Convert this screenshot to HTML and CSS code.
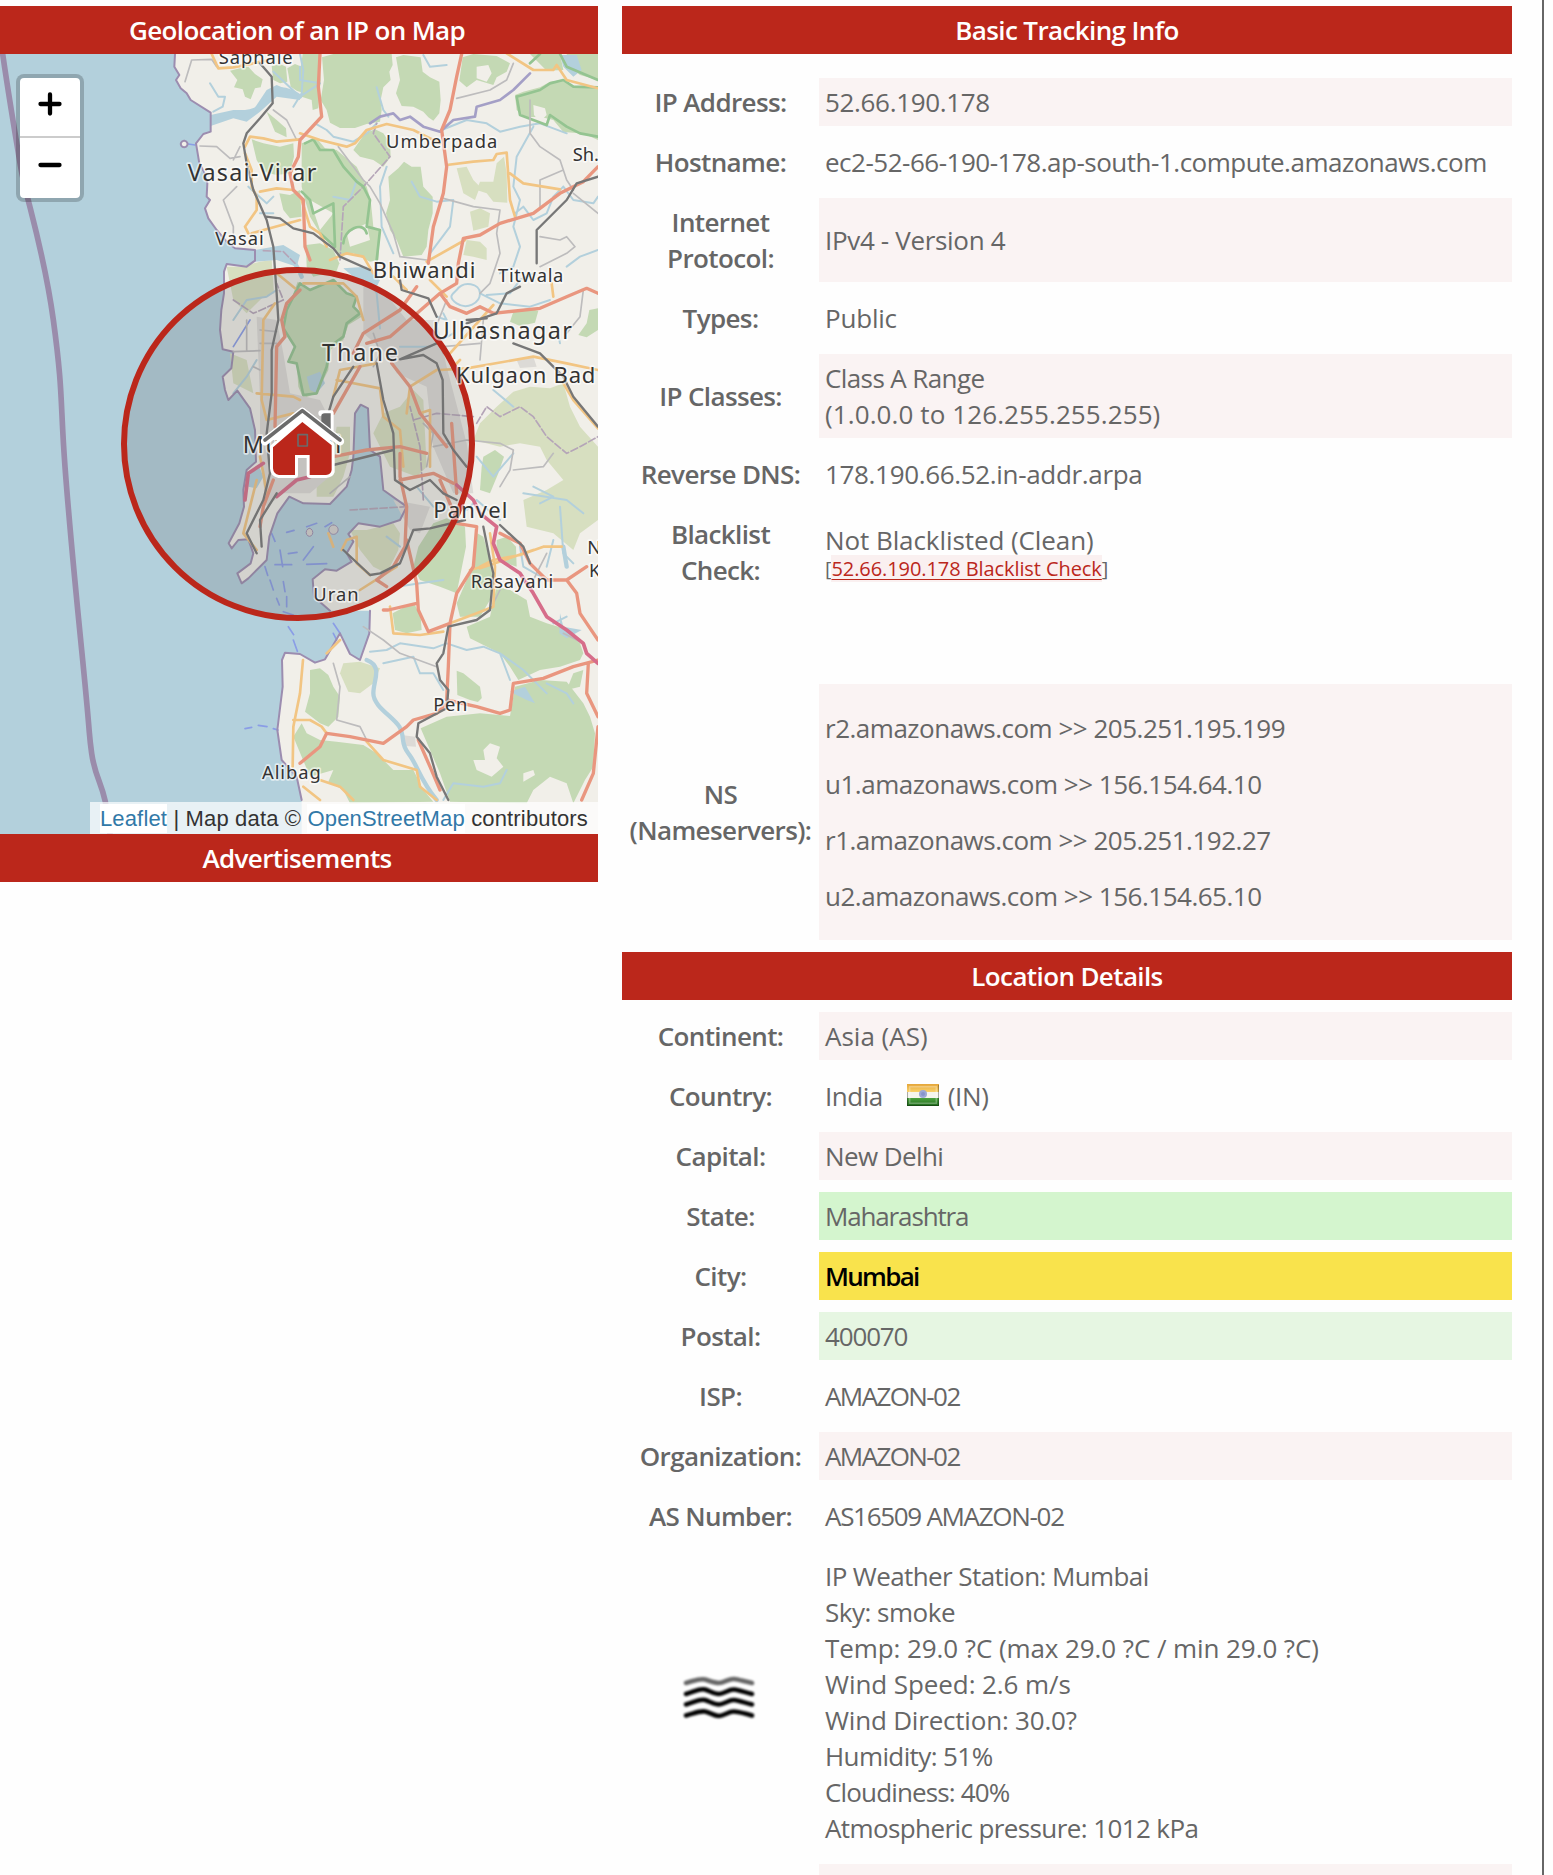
FILE: index.html
```html
<!DOCTYPE html>
<html lang="en">
<head>
<meta charset="utf-8">
<title>IP Tracker</title>
<link rel="stylesheet" href="styles.css">
</head>
<body>
<div class="page">
  <section class="left">
    <h2 class="bar">Geolocation of an IP on Map</h2>
    <div class="map">
      <svg class="tiles" viewBox="0 162 1794 2340" width="598" height="780">
        <rect class="sea" x="0" y="162" width="1794" height="2340"/>
        <!-- land -->
        <path class="land" d="M525 162L523 200 538 225 528 240 542 265 560 280 572 300 632 338 632 395 610 402 588 430 598 490 612 515 622 550 620 590 630 600 615 625 625 655 650 690 680 725 705 745 765 750 765 782 740 800 680 792 672 815 672 880 664 930 660 990 668 1048 700 1055 694 1105 668 1130 675 1170 685 1200 712 1172 750 1225 765 1290 768 1385 740 1410 730 1470 732 1520 718 1570 686 1630 695 1645 715 1620 745 1618 760 1660 752 1690 712 1720 725 1750 745 1735 800 1680 808 1610 832 1540 868 1490 910 1510 990 1512 1040 1460 1055 1410 1060 1370 1065 1240 1082 1214 1104 1225 1110 1350 1140 1370 1150 1470 1220 1520 1200 1560 1140 1580 1075 1570 1045 1602 1060 1625 1040 1660 1055 1685 1010 1712 975 1708 938 1738 942 1790 990 1832 1110 1832 1108 1900 1080 1980 1050 1962 1020 1900 975 1978 945 1988 900 1962 855 1958 846 1980 848 2060 832 2190 845 2280 890 2330 905 2400 905 2502 1794 2502 1794 162z"/>
        <ellipse class="land" cx="552" cy="432" rx="10" ry="9"/>
        <!-- woods -->
        <g class="wood">
          <path d="M690 212L720 205 745 200 765 222 788 238 782 262 765 265 752 298 735 290 728 268 702 262 712 240z"/>
          <path d="M815 198L840 192 858 200 862 245 840 250 820 240z"/>
          <path d="M862 205L885 192 905 200 912 280 890 272 872 260z"/>
          <path d="M908 162L958 162 962 240 955 325 938 330 935 300 905 290 900 220z"/>
          <path d="M966 172L1000 162 1175 162 1178 195 1168 215 1172 240 1150 262 1142 300 1145 330 1140 365 1100 372 1065 384 1020 384 990 368 980 330 962 300 972 240z"/>
          <path d="M1188 172L1210 165 1262 172 1268 215 1290 232 1318 245 1322 300 1318 340 1300 362 1285 352 1270 335 1240 320 1205 318 1188 280 1200 240z"/>
          <path d="M1388 172L1420 162 1490 168 1530 190 1520 215 1490 232 1480 255 1430 240 1400 262 1378 242z"/>
          <path d="M1545 285L1570 275 1620 262 1650 245 1690 240 1720 262 1760 255 1794 268 1794 420 1760 405 1740 400 1690 396 1660 360 1620 350 1575 352 1550 330z"/>
          <path d="M1590 162L1700 162 1705 195 1740 225 1794 240 1794 162 1680 162 1690 210 1640 212z"/>
          <path d="M1735 162L1794 162 1794 235 1745 215z"/>
          <path d="M1060 450L1095 400 1125 388 1150 400 1170 430 1172 470 1150 500 1120 480 1080 470z"/>
          <path d="M1165 530L1195 505 1212 485 1235 500 1262 500 1270 560 1298 590 1298 640 1285 690 1280 740 1265 765 1210 770 1190 720 1170 690 1158 640 1170 600z"/>
          <path d="M905 430L950 415 975 445 1010 450 1070 500 1100 560 1112 600 1120 680 1140 695 1135 780 1110 785 1060 760 1020 765 1000 740 960 700 930 650 915 600 905 560z"/>
          <path d="M918 735L960 730 1000 750 1018 790 1010 812 940 830 920 800z"/>
          <path d="M755 418L790 430 840 440 880 430 882 470 870 520 830 525 790 515 770 480z"/>
          <path d="M838 580L870 585 900 570 905 650 870 655 850 630z"/>
          <path d="M800 335L830 360 858 385 860 412 825 395z"/>
          <path d="M893 845L930 870 1000 840 1040 880 1070 890 1062 920 1085 950 1045 975 1030 1020 990 1050 985 1110 950 1180 910 1195 895 1160 890 1090 865 1085 885 1040 850 985 862 930z"/>
          <path d="M1540 935L1580 925 1615 932 1605 968 1560 978 1530 965z"/>
          <path d="M1768 930L1794 925 1794 990 1760 1012 1735 1005 1760 970z"/>
          <path d="M1300 1570L1340 1555 1395 1580 1398 1640 1390 1680 1370 1780 1320 1760 1260 1740 1240 1700 1255 1640z"/>
          <path d="M1450 1610L1470 1680 1480 1720 1470 1800 1440 1850 1380 1850 1370 1810 1400 1740 1420 1690 1432 1600z"/>
          <path d="M1445 1400L1450 1370 1485 1350 1512 1370 1495 1420 1470 1480 1440 1470z"/>
          <path d="M1490 1620L1520 1610 1548 1640 1550 1700 1520 1690 1490 1660z"/>
          <path d="M1178 1840L1215 1820 1245 1815 1262 1850 1265 1890 1220 1900 1185 1890z"/>
          <path d="M1400 1880L1470 1850 1490 1760 1530 1770 1580 1800 1590 1850 1640 1870 1690 1885 1740 1930 1750 1960 1740 1980 1680 2000 1620 2010 1555 2040 1530 2000 1500 1960 1440 1930 1410 1915z"/>
          <path d="M1370 2012L1390 2020 1440 2060 1448 2110 1410 2100 1372 2085z"/>
          <path d="M930 2010L960 2005 985 2025 1000 2060 1020 2090 1015 2150 985 2180 960 2170 915 2135 930 2080z"/>
          <path d="M880 2210L905 2170 920 2200 960 2220 1010 2225 1090 2235 1130 2260 1180 2310 1240 2310 1270 2370 1300 2405 1050 2410 1030 2370 985 2345 1000 2310 930 2330z"/>
          <path d="M1262 2185L1340 2150 1440 2140 1530 2148 1545 2060 1620 2040 1700 2045 1750 2110 1770 2150 1785 2200 1780 2300 1755 2340 1720 2410 1700 2350 1650 2330 1600 2370 1580 2410 1350 2405 1320 2320 1290 2250z"/>
          <path d="M1700 2070L1720 2020 1750 2010 1740 2060z"/>
        </g>
        <!-- scrub -->
        <g class="scrub">
          <path d="M680 800L720 800 780 785 815 780 822 880 790 890 740 940 700 900z"/>
          <path d="M1370 505L1400 500 1420 540 1440 560 1425 600 1390 580z"/>
          <path d="M1490 490L1512 470 1520 520 1522 608 1480 605 1460 580 1430 570 1440 545 1480 545z"/>
          <path d="M1410 635L1440 625 1470 640 1465 680 1420 692z"/>
          <path d="M1400 720L1440 725 1460 745 1460 780 1420 770 1390 765z"/>
          <path d="M1420 1320L1440 1270 1490 1220 1540 1175 1590 1160 1650 1165 1690 1150 1710 1220 1740 1280 1794 1340 1794 1560 1740 1600 1720 1650 1660 1600 1580 1580 1570 1500 1640 1470 1690 1440 1640 1380 1620 1340 1560 1330 1500 1340z"/>
          <path d="M1050 1590L1100 1590 1180 1570 1200 1600 1195 1650 1160 1720 1120 1700 1080 1650z"/>
          <path d="M1030 1990L1080 1985 1140 2005 1120 2050 1080 2080 1045 2075 1020 2020z"/>
          <path d="M1120 1300L1150 1240 1200 1220 1240 1170 1270 1200 1280 1400 1250 1430 1170 1400z"/>
          <path d="M1030 1430L1050 1360 1050 1280 1010 1280 990 1380 950 1440 950 1490 1000 1490z"/>
          <path d="M690 1060L740 1080 760 1180 700 1150z"/>
        </g>
        <!-- built-up areas -->
        <path class="urban" d="M770 950L830 960 850 1060 870 1180 960 1200 1000 1280 1000 1420 930 1480 850 1480 800 1520 780 1380 780 1200zM1090 860L1140 860 1220 960 1310 960 1340 1100 1400 1330 1420 1480 1360 1480 1300 1340 1280 1160 1190 1120 1160 1060 1090 1000zM1180 1500L1290 1520 1260 1600 1230 1590zM1205 2205L1245 2210 1248 2240 1215 2238zM1550 1080L1600 1070 1610 1100 1560 1104z"/>
        <!-- clearings -->
        <path class="land" d="M1430 200L1465 195 1475 220 1460 245 1430 235zM1600 315L1635 325 1640 345 1620 365 1602 345zM1460 2080L1480 2070 1500 2100 1495 2140 1430 2110zM1450 2250L1470 2230 1500 2240 1490 2275 1510 2300 1475 2330 1430 2310 1420 2280 1455 2280zM1570 2320L1600 2310 1605 2325 1570 2345zM930 600L1000 640 960 690zM1040 700L1100 670 1110 720 1050 740z"/>
        <!-- lakes and estuaries -->
        <path class="water" d="M632 345L700 330 760 330 800 270 830 255 900 285 900 300 830 290 780 335 740 365 700 355 632 378zM765 750L850 735 900 765 890 800 830 780 765 785zM1680 165L1730 165 1745 210 1720 230 1690 200zM920 1130L960 1115 975 1150 950 1180 930 1170zM1680 1840L1690 1880 1745 1890 1700 1915 1678 1900zM1530 2075L1575 2060 1605 2110 1580 2100zM1030 805L1100 800 1140 840 1130 860 1060 830zM745 1420L778 1400 790 1430 770 1465 745 1460z"/>
        <g class="lake">
          <path d="M632 360C700 330 760 350 790 310S840 250 900 290M765 765C830 740 880 760 905 830M1100 1980C1150 2000 1120 2040 1120 2080S1180 2150 1198 2180 1200 2230 1225 2260 1260 2340 1310 2400M1690 1640L1700 1700"/>
        </g>
        <g class="river">
          <path d="M630 250L655 290 675 290 668 320 640 335M820 215L900 290 960 250 900 240 900 200M900 162L910 210 905 280 880 320M945 370L980 390 1000 410 1060 425 1100 400 1130 370M1130 262L1150 330 1165 350M1270 165L1290 200 1340 195M1160 500L1140 560 1145 680 1180 760M1235 545L1260 590 1310 605 1360 600 1350 680 1290 760"/>
          <path d="M1325 390L1400 360 1460 370 1500 395 1560 380 1620 370 1700 400M1600 380L1550 470 1540 560 1560 600 1540 680 1560 740 1540 800 1500 820M1690 560L1660 590 1640 640 1600 660 1570 620 1545 640M1690 560L1720 600 1780 610 1794 590M1370 870C1390 840 1440 850 1440 880S1400 930 1370 910 1360 880 1370 870M1460 885L1530 880 1560 840 1600 820M1440 880L1500 910 1590 920 1650 900M1700 800L1740 770 1794 750"/>
          <path d="M700 1180L740 1130 770 1080M700 960L740 900 800 890 830 870M745 560L800 610 820 590M780 640L820 640M1200 1040L1290 1040 1360 1000M1140 985L1130 880 1100 830M1310 950L1340 960 1330 940M1000 590L1050 600 1070 540"/>
          <path d="M1110 1955L1160 1950 1200 1930 1300 1945 1340 1930 1400 1950 1450 1940 1500 1960 1530 2040M1150 1990L1240 1970 1260 2020 1300 2020 1330 2070M1500 1960L1570 2010 1640 2080M1640 2050L1700 2080 1720 2110M1330 2400L1360 2350 1450 2360 1500 2350 1520 2310M1400 1530L1430 1500 1500 1560M1540 1360L1480 1430 1430 1370M1600 1460L1660 1490 1620 1510M1570 1480L1700 1500 1750 1540M1680 1520L1690 1660 1720 1690M1560 1640L1570 1700 1640 1740M1660 1620L1640 1700M1660 1870L1700 1850M1190 1760L1260 1750 1330 1740M1300 1520L1250 1460M1160 1610L1200 1640M1670 980L1680 1030M1480 1170L1540 1220"/>
        </g>
        <path class="ford" d="M700 1040l50-80M815 1600l10 24M860 1597l22-6M840 1650l8 50M865 1661l26-4M825 1694l50 0M795 1700l8 26M810 1740l10 30M850 1745l5 30M830 1795l8 20M860 1790l0 30M850 1835l30 10M865 1880l16 24M880 1920l12 34M735 2186l20-4M775 2176l26 4M820 2186l14 4M565 432l20 3M920 1693l60-2M920 1580l30-10M940 1640l-30 40M1000 1900l10 20M975 1580l20-12M1000 1870l20 30"/>
        <!-- coast, park and district lines -->
        <path class="coast" d="M525 162L523 200 538 225 528 240 542 265 560 280 572 300 632 338 632 395 610 402 588 430 598 490 612 515 622 550 620 590 630 600 615 625 625 655 650 690 680 725 705 745 765 750 765 782 740 800 680 792 672 815 672 880 664 930 660 990 668 1048 700 1055 694 1105 668 1130 675 1170 685 1200 712 1172 750 1225 765 1290 768 1385 740 1410 730 1470 732 1520 718 1570 686 1630 695 1645 715 1620 745 1618 760 1660 752 1690 712 1720 725 1750 745 1735 800 1680 808 1610 832 1540 868 1490 910 1510 990 1512 1040 1460 1055 1410 1060 1370 1065 1240 1082 1214 1104 1225 1110 1350 1140 1370 1150 1470 1220 1520 1200 1560 1140 1580 1075 1570 1045 1602 1060 1625 1040 1660 1055 1685 1010 1712 975 1708 938 1738 942 1790 990 1832M1110 1832L1108 1900 1080 1980 1050 1962 1020 1900 975 1978 945 1988 900 1962 855 1958 846 1980 848 2060 832 2190 845 2280 890 2330 905 2400M552 422a10 10 0 1 0 1 0"/>
        <path class="islet" d="M928 1585a10 12 0 1 0 1 0M1000 1575a14 14 0 1 0 1 0"/>
        <path class="dash" d="M1050 1530L1220 1520M1430 1270L1460 1220 1500 1250 1560 1220 1600 1250 1640 1310 1700 1360 1740 1340 1794 1310M700 900L760 940 850 900 830 850M1240 1260L1310 1240 1420 1250M1020 780L1030 620 1090 560 1170 470 1120 400 1130 370M790 752L850 755 885 790M1270 1500L1260 1340 1230 1220"/>
        <path class="park" d="M915 430L940 418 960 450 1000 450 1030 500 1070 545M1070 545L1090 560 1110 600 1100 680 1140 690 1130 780M905 575L930 600 940 640 1000 610 1005 740 960 700M1030 730C1030 690 1090 660 1100 700M900 850L930 870 1000 840 1040 880 1070 890 1060 920 1080 940 1040 970 1030 1010 990 1040 980 1100 950 1180 910 1185 890 1090 865 1085 885 1040 850 985 860 930zM1550 290L1620 270 1650 250 1690 240 1720 260 1794 262M1550 290L1560 345 1640 375 1650 345 1700 380 1740 400 1794 410M1590 190L1620 162M1680 162L1700 200 1794 240"/>
        <path class="province" d="M1110 370L1140 350 1160 345 1180 340 1200 360 1230 350 1270 380 1320 395 1360 360 1425 350 1430 320 1500 300 1540 270 1590 220"/>
        <path class="maritime" d="M8 162C28 300 45 400 62 500S130 740 160 960 180 1200 195 1400 215 1650 245 1950 265 2190 275 2260 302 2340 316 2405L330 2502"/>
        <!-- minor roads -->
        <g class="minor">
          <path d="M555 245L575 180 635 178 650 200M600 438L650 440 690 475 720 470M700 480L720 440M820 330L860 360 890 420M710 560L670 600 700 680 700 700M1015 440L1090 540 1110 560 1140 610 1180 700 1200 770 1280 780M1330 595L1420 620 1500 630 1490 700 1500 760 1470 850 1440 880M1370 295L1470 270 1520 240 1540 190M1590 300L1590 400 1620 440 1680 480 1700 540 1720 570M1620 620L1620 540 1690 510M1620 710L1680 720 1700 710 1725 740 1700 760 1620 800M1720 580L1794 640M1750 870L1740 950 1700 1000M1450 960L1440 1080M740 960L740 1050M700 1055L780 1052M760 1100L780 1110M780 990L830 995M780 1030L830 1030"/>
          <path d="M1300 1340L1400 1320 1500 1330 1540 1350 1530 1410 1500 1460M1280 1400L1300 1300 1270 1270M1540 1410L1630 1400 1660 1360M1000 1990L1020 2060 1010 2160 1080 2180 1100 2220M1090 1880L1150 1920 1200 1960 1310 2000M1600 1740L1620 1700 1640 1660M990 1480L1050 1430M1120 1000L1140 1060 1120 1100M1340 900L1300 1000 1330 1060M1330 1040L1440 1030M1500 1770L1480 1810M1690 1900L1750 1930"/>
        </g>
        <!-- secondary roads -->
        <g class="sec">
          <path d="M635 162L655 205 700 202 800 182M735 440L750 410 790 415 830 425 900 418M735 460L755 510 755 560 770 590 770 630 735 680 745 700M755 700L900 660M780 575L830 565 880 570M830 820L885 865M900 400L960 420 1040 440 1065 430 1100 390 1160 372 1240 390 1320 430M1340 495L1420 485 1480 480 1490 462 1520 458 1530 600 1545 650M1530 520L1570 550 1680 568M1520 160L1600 210 1660 210 1670 195 1700 240 1794 265M905 600L930 680 960 700 980 740M990 780L1040 760 1090 770 1120 820M1280 785L1395 720M1180 830L1220 870M1290 840L1340 890M1655 850L1660 890M1480 915L1350 1060M1320 1110L1400 1105 1600 1070 1700 1090 1794 1110M1690 1150L1720 1200 1794 1285"/>
          <path d="M825 910L790 960 785 1200 800 1260 880 1240M770 1180L880 1190 900 1200M910 850L1030 850 1070 890 1090 960M1010 1140L1140 1165 1150 1250 1200 1290 1210 1400M1220 1240L1230 1160 1310 1110M1130 1090L1020 1110 1000 1190M1410 1710L1445 1700M770 1440L740 1560 730 1600 770 1650M780 1370L790 1420 800 1480M1025 1650L1040 1620 1070 1610 1070 1690 1110 1725M1080 1770L1190 1700M1440 1700L1480 1680 1560 1665 1630 1640 1685 1640M1170 1820L1180 1900 1260 1905 1330 1895M1350 1870L1430 1840 1480 1820 1485 1700 1470 1600M909 1980L900 2080 880 2180 878 2300M880 2160L930 2160 965 2180 980 2200M1100 2225L1150 2280 1250 2310 1260 2360 1310 2400M960 2340L1020 2360 1060 2400M910 2360L960 2400M980 1960L1020 1920M985 1600L1000 1640M1260 1240L1290 1230 1290 1400M1380 1080L1360 1100M1440 1705L1600 1650"/>
        </g>
        <!-- trunk roads -->
        <g class="trunk">
          <path d="M960 162L955 260 965 350 900 420 895 470 870 520 880 570 910 600 915 740 930 780M1385 162L1370 230 1350 330 1325 390 1340 500 1330 580 1300 680 1285 790M1794 500L1750 545 1680 580 1600 640 1500 670 1440 705 1390 715 1375 790 1370 850 1320 880 1170 1010 1100 1030M1320 880L1350 920 1400 940 1440 920 1480 940 1620 925 1700 890 1760 865 1794 880M1250 860L1200 930 1090 1000 1060 1060M900 870L860 910 845 960 855 1010 830 1040 825 1280M1175 1090L1230 1160 1260 1240 1340 1340M1320 1440L1375 1570"/>
          <path d="M1000 1370L1100 1350 1200 1340 1280 1360M1000 1240L1080 1100M1200 1360L1200 1430 1220 1520 1215 1640 1180 1700 1130 1740 1160 1760M1220 1620L1250 1750 1255 1830 1285 1895 1350 1870 1370 1780 1420 1700 1430 1580 1370 1570M1150 1830L1165 1830 1250 1810M1350 1870L1345 2000 1340 2100M1500 1600L1560 1630 1590 1690 1640 1740 1700 1740 1730 1780 1740 1840 1794 1920M1700 1740L1760 1700M1340 2100L1430 2120 1500 2140 1530 2130 1540 2050 1630 2035 1720 2000 1794 1980M1765 1990L1760 2080 1794 2150M1794 2180L1780 2320 1745 2400M1340 2110L1310 2140 1240 2160 1220 2180 1150 2230 1050 2210 980 2200 960 2240 900 2290M1255 2220L1290 2300 1320 2370M1200 1440L1300 1420 1360 1450M820 1440L790 1520 780 1580M1355 1270L1370 1480"/>
        </g>
        <path class="motor" d="M1370 1455L1420 1500 1440 1540 1490 1580 1480 1630 1500 1680 1560 1720 1600 1780 1640 1850 1700 1890 1750 1930 1760 1960 1794 1990M735 1500L745 1420 790 1390M830 1490L890 1440 930 1430"/>
        <!-- railways -->
        <path class="rail" d="M780 190L815 230 818 310 780 355 740 400 730 430 740 490 760 570 800 660 820 740 830 880 835 960 815 1050 815 1180 800 1300 810 1420 790 1500 740 1600 770 1660M798 650L840 655 880 685 940 700 1000 745 1020 770 1110 810M1200 840L1205 870 1285 895 1310 950M1200 1078L1270 1065 1310 1090 1328 1140 1330 1300 1360 1350 1400 1400M1794 530L1730 550 1700 600 1610 690 1610 790M1560 860L1520 880 1490 940 1400 970M1400 960L1460 955M1310 1030L1200 1078M1540 1030L1620 1060 1690 1130 1720 1190 1794 1280M1060 1100L1000 1190 985 1240M1130 1090L1150 1200 1180 1300 1185 1440 1230 1470 1290 1440 1330 1480 1370 1500M1000 1395L1180 1350M1395 1560L1290 1585 1240 1590 1200 1690 1140 1720 1110 1725 1030 1650M1450 1580L1470 1680 1480 1720 1470 1830 1430 1860 1345 1880 1330 1960 1310 1990 1320 2040 1345 2070 1340 2125 1255 2170 1250 2210 1290 2260 1310 2330 1345 2400M830 1480L780 1560 785 1640M1500 1575L1570 1640 1590 1690"/>

        <!-- accuracy radius -->
        <circle class="radius" cx="894" cy="1332" r="522"/>

        <!-- place names -->
        <g class="places">
          <text x="656" y="191" font-size="55" textLength="222">Saphale</text>
          <text x="563" y="544" font-size="70" textLength="386">Vasai-Virar</text>
          <text x="646" y="734" font-size="55" textLength="145">Vasai</text>
          <text x="1158" y="445" font-size="55" textLength="334">Umberpada</text>
          <text x="1718" y="483" font-size="55">Sh.</text>
          <text x="1118" y="833" font-size="66" textLength="308">Bhiwandi</text>
          <text x="1494" y="845" font-size="55" textLength="196">Titwala</text>
          <text x="1298" y="1017" font-size="70" textLength="418">Ulhasnagar</text>
          <text x="966" y="1083" font-size="70" textLength="228">Thane</text>
          <text x="1368" y="1150" font-size="66" textLength="418">Kulgaon Bad</text>
          <text x="728" y="1360" font-size="70" textLength="296">Mumbai</text>
          <text x="1300" y="1553" font-size="66" textLength="222">Panvel</text>
          <text x="1412" y="1763" font-size="55" textLength="248">Rasayani</text>
          <text x="940" y="1803" font-size="55" textLength="136">Uran</text>
          <text x="1762" y="1662" font-size="55">N</text>
          <text x="1767" y="1730" font-size="55">K</text>
          <text x="1300" y="2134" font-size="55" textLength="102">Pen</text>
          <text x="786" y="2336" font-size="55" textLength="176">Alibag</text>
        </g>

        <!-- home marker -->
        <g class="home">
          <path class="halo" d="M795 1320L907 1232 1020 1320M964 1240H992V1290M819 1342L907 1266 995 1336V1415Q992 1424 978 1425H929V1365H885V1425H837Q820 1422 819 1405z"/>
          <path class="chimney" d="M964 1248Q964 1240 974 1240H992V1290L964 1270z"/>
          <path class="walls" d="M819 1342L907 1266 995 1336V1410Q993 1424 978 1425H929V1365H885V1425H837Q820 1422 819 1405z"/>
          <path class="gap" d="M795 1324L907 1236 1020 1324"/>
          <path class="roof" d="M795 1320L907 1232 1020 1320"/>
          <path class="window" d="M894 1304h28v34h-28z"/>
        </g>
      </svg>
      <div class="zoom">
        <a class="zoom-btn"><svg viewBox="0 0 24 24" width="24" height="24"><path d="M12 2.500V21.500M2.500 12H21.500"/></svg></a>
        <a class="zoom-btn"><svg viewBox="0 0 24 24" width="24" height="24"><path d="M2.500 12H21.500"/></svg></a>
      </div>
      <div class="credit"><a>Leaflet</a> | Map data © <a>OpenStreetMap</a> contributors</div>
    </div>
    <h2 class="bar">Advertisements</h2>
  </section>

  <section class="right">
    <h2 class="bar">Basic Tracking Info</h2>
    <dl class="info first">
      <dt>IP Address:</dt><dd class="tint k3">52.66.190.178</dd>
      <dt>Hostname:</dt><dd class="k5">ec2-52-66-190-178.ap-south-1.compute.amazonaws.com</dd>
      <dt>Internet<br>Protocol:</dt><dd class="tint k3">IPv4 - Version 4</dd>
      <dt>Types:</dt><dd class="k2">Public</dd>
      <dt>IP Classes:</dt><dd class="tint"><span class="k6">Class A Range</span><span class="w1">(1.0.0.0 to 126.255.255.255)</span></dd>
      <dt>Reverse DNS:</dt><dd class="k3">178.190.66.52.in-addr.arpa</dd>
      <dt>Blacklist<br>Check:</dt><dd class="k1 check">Not Blacklisted (Clean)<small>[<a>52.66.190.178 Blacklist Check</a>]</small></dd>
      <dt class="blank"></dt><dd class="blank"></dd>
      <dt>NS<br>(Nameservers):</dt>
      <dd class="tint servers k5"><p>r2.amazonaws.com &gt;&gt; 205.251.195.199</p><p>u1.amazonaws.com &gt;&gt; 156.154.64.10</p><p>r1.amazonaws.com &gt;&gt; 205.251.192.27</p><p>u2.amazonaws.com &gt;&gt; 156.154.65.10</p></dd>
    </dl>
    <h2 class="bar">Location Details</h2>
    <dl class="info">
      <dt>Continent:</dt><dd class="tint">Asia (AS)</dd>
      <dt>Country:</dt>
      <dd class="country"><span class="k5">India</span>
        <svg class="flag" viewBox="0 0 32 22" width="32" height="22">
          <defs>
            <linearGradient id="saffron" x2="0" y2="1"><stop stop-color="#e5a63a"/><stop offset="1" stop-color="#fbd36b"/></linearGradient>
            <linearGradient id="green" x2="0" y2="1"><stop stop-color="#4da23f"/><stop offset="1" stop-color="#1f6a1c"/></linearGradient>
          </defs>
          <path fill="#f6f5ee" d="M0 0h32v22H0z"/>
          <path fill="url(#saffron)" d="M0 0h32v8H0z"/>
          <path fill="url(#green)" d="M0 14h32v8H0z"/>
          <circle cx="16" cy="10" r="4" fill="#9da8d4"/><circle cx="16" cy="10" r="2" fill="#8794cc"/>
          <path fill="none" stroke="#fff" stroke-opacity=".28" stroke-width="1.500" d="M2.700 2.700h26.600v16.600H2.700z"/>
          <path fill="none" stroke="#000" stroke-opacity=".3" d="M31.500 1v20.500H.5V8"/>
        </svg>
        <span class="k3">(IN)</span></dd>
      <dt>Capital:</dt><dd class="tint k6">New Delhi</dd>
      <dt>State:</dt><dd class="state k11">Maharashtra</dd>
      <dt>City:</dt><dd class="city">Mumbai</dd>
      <dt>Postal:</dt><dd class="postal k11">400070</dd>
      <dt>ISP:</dt><dd class="k16">AMAZON-02</dd>
      <dt>Organization:</dt><dd class="tint k16">AMAZON-02</dd>
      <dt>AS Number:</dt><dd class="k13">AS16509 AMAZON-02</dd>
      <dt>
        <svg class="smoke" viewBox="0 0 72 44" width="72" height="44">
          <path opacity=".6" d="M3 8C12 5.500 17 3 22 4.500S31 8 36 8 46 3.500 51 4 61 6.500 69 8"/>
          <path d="M3 19C12 16.500 17 13 22 14.500S31 19 36 19 46 14 51 14.500 61 17 69 19"/>
          <path d="M3 29.500C12 27 17 23.500 22 25S31 29.500 36 29.500 46 24.500 51 25 61 27.500 69 29.500"/>
          <path d="M3 40.500C12 38 17 35.500 22 36.500S31 41 36 41 46 36 51 36.500 61 38 69 40.500"/>
        </svg>
      </dt>
      <dd><span class="k6">IP Weather Station: Mumbai</span><span class="k5">Sky: smoke</span><span class="k1">Temp: 29.0 ?C (max 29.0 ?C / min 29.0 ?C)</span><span class="k1">Wind Speed: 2.6 m/s</span><span class="k2">Wind Direction: 30.0?</span><span class="k6">Humidity: 51%</span><span class="k9">Cloudiness: 40%</span><span class="k6">Atmospheric pressure: 1012 kPa</span></dd>
      <dt></dt><dd class="tint"></dd>
    </dl>
  </section>
</div>
</body>
</html>
```
FILE: styles.css
```css
* { box-sizing: border-box; }
html { overflow: hidden; }
body {
  margin: 0;
  background: #fefefe;
  color: #666;
  font: 26px/36px "Trebuchet MS", "Open Sans", sans-serif;
}
.page {
  display: flex;
  gap: 24px;
  width: 1544px;
  height: 1875px;
  padding: 6px 30px 0 0;
  border-right: 2px solid #666;
  overflow: hidden;
}
.left { width: 598px; }
.right { width: 890px; }
.bar {
  margin: 0;
  padding: 6px;
  background: #bb271b;
  color: #fff;
  font-size: 26px;
  font-weight: 600;
  letter-spacing: -0.62px;
  text-align: center;
}
.left .bar { padding-right: 10px; }

/* Map */
.map { position: relative; height: 780px; overflow: hidden; }
.tiles { display: block; }
.tiles path, .radius { fill: none; stroke-linejoin: round; stroke-linecap: round; }
.sea, .tiles .water { fill: #b3d0dc; }
.land, .tiles .land { fill: #f1efe9; }
.tiles .urban { fill: #dcdad6; }
.tiles .wood path { fill: #c4d9b4; }
.tiles .scrub path { fill: #d7dfc0; }
.lake path { stroke: #b3d0dc; stroke-width: 13; }
.river path { stroke: #b3d0dc; stroke-width: 6; }
.tiles .ford { stroke: #8a9de6; stroke-width: 5; }
.tiles .coast { stroke: #9c8db0; stroke-width: 6; }
.tiles .islet { fill: #d5d3d0; stroke: #9c8db0; stroke-width: 3; }
.tiles .dash { stroke: #b5a5b8; stroke-width: 5; stroke-dasharray: 22 8; }
.tiles .park { stroke: #94c491; stroke-width: 8; }
.tiles .province { stroke: #a49fc6; stroke-width: 8; }
.tiles .maritime { stroke: #9a8cab; stroke-width: 17; }
.minor path { stroke: #bdbcbd; stroke-width: 5; }
.sec path { stroke: #f2c583; stroke-width: 8; }
.trunk path { stroke: #e9967f; stroke-width: 10; }
.tiles .motor { stroke: #d66d8a; stroke-width: 11; }
.tiles .rail { stroke: #777; stroke-width: 7; }
.radius { fill: #666; fill-opacity: 0.2; stroke: #bb271b; stroke-width: 18; }
.places {
  font-family: "Noto Sans", sans-serif;
  fill: #333;
  stroke: #fff;
  stroke-opacity: 0.6;
  stroke-width: 10;
  stroke-linejoin: round;
  paint-order: stroke;
}
.tiles .halo { fill: #fff; stroke: #fff; stroke-width: 18; }
.tiles .walls { fill: #bb271b; }
.tiles .chimney { fill: #6b6b6b; }
.tiles .gap { stroke: #fff; stroke-width: 25; }
.tiles .roof { stroke: #6b6b6b; stroke-width: 11; }
.tiles .window { stroke: #6b6b6b; stroke-width: 5; }
.zoom {
  position: absolute;
  top: 20px;
  left: 16px;
  border: 4px solid rgba(0, 0, 0, 0.2);
  border-radius: 8px;
  background-clip: padding-box;
  background-color: #fff;
}
.zoom-btn {
  display: flex;
  align-items: center;
  justify-content: center;
  width: 60px;
  height: 60px;
  padding-bottom: 7px;
}
.zoom-btn:first-child { padding-bottom: 6px; border-bottom: 2px solid #ccc; }
.zoom-btn svg { fill: none; stroke: #000; stroke-width: 4.300; stroke-linecap: round; }
.credit {
  position: absolute;
  right: 0;
  bottom: 0;
  height: 32px;
  padding: 0 10px;
  background: rgba(255, 255, 255, 0.7);
  color: #333;
  font: 22px/33px "Helvetica Neue", "Liberation Sans", sans-serif;
  letter-spacing: 0.16px;
  white-space: nowrap;
}
.credit a { padding: 2px 0; background: #fff; color: #3279a8; }

/* Detail tables */
.info {
  display: grid;
  grid-template-columns: 197px 693px;
  row-gap: 12px;
  margin: 12px 0;
}
.info.first { margin-top: 24px; }
dt, dd {
  display: flex;
  flex-direction: column;
  justify-content: center;
  min-height: 48px;
  margin: 0;
  padding: 6px;
  white-space: nowrap;
}
dt { align-items: center; font-weight: 600; letter-spacing: -0.62px; text-align: center; }
.tint { background: #faf3f3; }
.blank { min-height: 66px; }
.state { background: #d4f5ce; }
.city { background: #f9e34c; color: #000; font-weight: 600; letter-spacing: -1.7px; }
.postal { background: #e6f6e2; }
.check small { margin-top: -3px; font-size: 20px; line-height: 28px; letter-spacing: -0.08px; }
.check a {
  background: #faf0f0;
  color: #bb271b;
  text-decoration: underline;
  text-decoration-thickness: 1px;
  text-underline-offset: 3px;
}
.servers { padding: 26px 6px; gap: 20px; }
.servers p { margin: 0; }
.country { flex-direction: row; justify-content: flex-start; align-items: center; }
.flag { margin: -3px 9px 0 24px; }
.smoke { margin: -10px 0 0 -4px; filter: blur(0.8px); }
.smoke path { fill: none; stroke: #000; stroke-width: 4.600; stroke-linecap: round; }

.k1 { letter-spacing: -0.08px; }
.k2 { letter-spacing: -0.2px; }
.k3 { letter-spacing: -0.33px; }
.k5 { letter-spacing: -0.49px; }
.k6 { letter-spacing: -0.6px; }
.k9 { letter-spacing: -0.85px; }
.k11 { letter-spacing: -1.15px; }
.k13 { letter-spacing: -1.3px; }
.k16 { letter-spacing: -1.6px; }
.w1 { letter-spacing: 0.1px; }
```
